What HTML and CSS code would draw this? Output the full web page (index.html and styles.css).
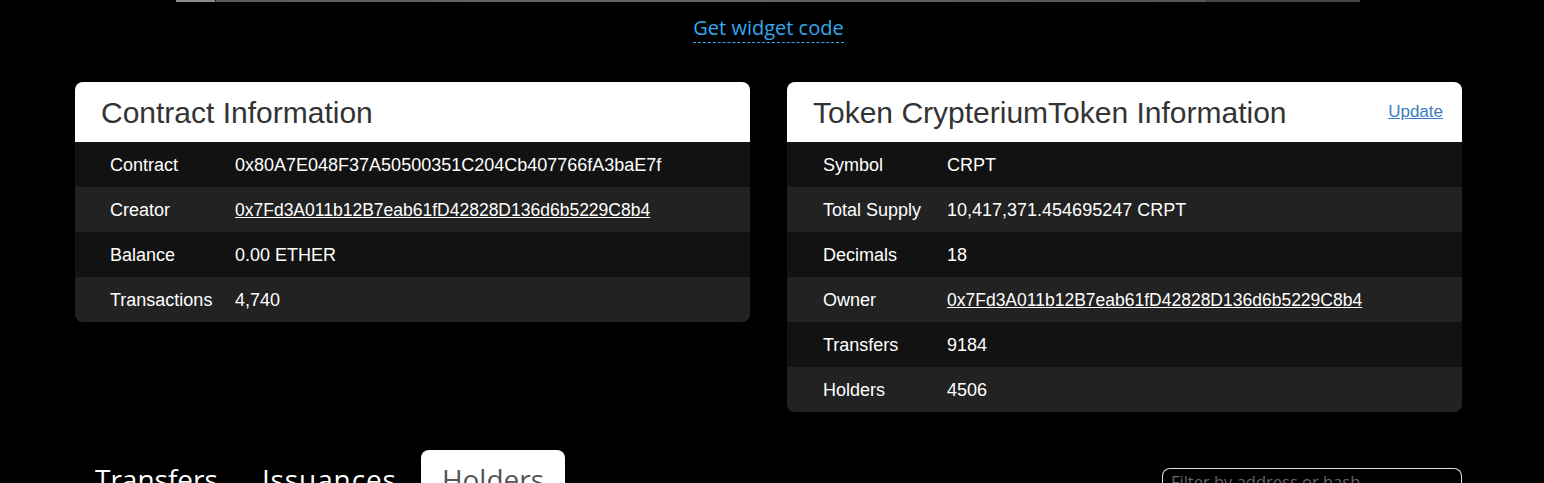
FILE: index.html
```html
<!DOCTYPE html>
<html>
<head>
<meta charset="utf-8">
<link rel="stylesheet" href="styles.css">
</head>
<body>
<div class="strip">
  <div class="seg seg-a"></div>
  <div class="seg seg-b"></div>
  <div class="seg seg-c"></div>
</div>
<div class="page">
  <div class="widget"><a class="widget-link" href="#">Get widget code</a></div>
  <div class="cards">
    <div class="card">
      <div class="card-head"><h2 class="card-title">Contract Information</h2></div>
      <div class="rows rows-left">
        <div class="row"><span class="lbl">Contract</span><span class="val">0x80A7E048F37A50500351C204Cb407766fA3baE7f</span></div>
        <div class="row"><span class="lbl">Creator</span><span class="val"><a class="addr" href="#">0x7Fd3A011b12B7eab61fD42828D136d6b5229C8b4</a></span></div>
        <div class="row"><span class="lbl">Balance</span><span class="val">0.00 ETHER</span></div>
        <div class="row"><span class="lbl">Transactions</span><span class="val">4,740</span></div>
      </div>
    </div>
    <div class="card">
      <div class="card-head"><h2 class="card-title">Token CrypteriumToken Information</h2><a class="update" href="#">Update</a></div>
      <div class="rows rows-right">
        <div class="row"><span class="lbl">Symbol</span><span class="val">CRPT</span></div>
        <div class="row"><span class="lbl">Total Supply</span><span class="val">10,417,371.454695247 CRPT</span></div>
        <div class="row"><span class="lbl">Decimals</span><span class="val">18</span></div>
        <div class="row"><span class="lbl">Owner</span><span class="val"><a class="addr" href="#">0x7Fd3A011b12B7eab61fD42828D136d6b5229C8b4</a></span></div>
        <div class="row"><span class="lbl">Transfers</span><span class="val">9184</span></div>
        <div class="row"><span class="lbl">Holders</span><span class="val">4506</span></div>
      </div>
    </div>
  </div>
  <div class="tabbar">
    <div class="tabs">
      <a class="tab" href="#">Transfers</a>
      <a class="tab tab-wide" href="#">Issuances</a>
      <a class="tab tab-active" href="#">Holders</a>
    </div>
    <input class="filter" type="text" placeholder="Filter by address or hash">
  </div>
</div>
</body>
</html>
```
FILE: styles.css
```css
html, body {
  margin: 0;
  padding: 0;
  background: #000;
  overflow: hidden;
}
body {
  font-family: "Liberation Sans", Arial, sans-serif;
  color: #fff;
}
.strip {
  display: flex;
  height: 2px;
  margin-left: 176px;
  width: 1184px;
}
.seg-a { width: 39px; background: #8a8a8a; }
.seg-b { width: 990px; background: linear-gradient(90deg, #5a5a5a, #666 40%, #555); border-left: 1px solid #222; }
.seg-c { flex: 1; background: #444; }
.page {
  margin-left: 75px;
  width: 1387px;
}
.widget {
  text-align: center;
  padding-top: 12px;
  height: 80px;
  box-sizing: border-box;
}
.widget-link {
  font-family: "Open Sans", sans-serif;
  font-size: 20px;
  line-height: 28px;
  color: #35a8ee;
  text-decoration: none;
  border-bottom: 1px dashed #35a8ee;
  display: inline-block;
}
.cards {
  display: flex;
  gap: 37px;
  align-items: flex-start;
}
.card {
  width: 675px;
  border-radius: 8px;
  overflow: hidden;
  background: #1a1a1a;
}
.card-head {
  background: #fff;
  height: 60px;
  display: flex;
  align-items: center;
  justify-content: space-between;
  padding: 0 19px 0 26px;
}
.card-title {
  margin: 0;
  font-weight: normal;
  font-size: 30px;
  color: #333;
  line-height: 34px;
  padding-top: 1px;
}
.update {
  font-size: 17px;
  color: #3a7cc0;
  text-decoration: underline;
  padding-bottom: 1px;
}
.row {
  display: flex;
  height: 45px;
  align-items: center;
  font-size: 18px;
  line-height: 22px;
  background: #121212;
}
.row:nth-child(even) {
  background: #222;
}
.rows-left .row { padding-left: 35px; }
.rows-right .row { padding-left: 36px; }
.rows-left .lbl { width: 125px; }
.rows-right .lbl { width: 124px; }
.lbl, .val { color: #fff; }
.addr {
  color: #fff;
  font-size: 17.5px;
  text-decoration: underline;
}
.tabbar {
  display: flex;
  justify-content: space-between;
  align-items: flex-start;
  margin-top: 38px;
}
.tabs {
  display: flex;
  gap: 4px;
}
.tab {
  font-family: "Open Sans", sans-serif;
  font-size: 28px;
  line-height: 34px;
  padding: 12px 20px 8px;
  color: #fff;
  text-decoration: none;
  border-radius: 8px 8px 0 0;
}
.tab-wide {
  letter-spacing: 0.9px;
}
.tab-active {
  background: #fff;
  color: #555;
  padding: 12px 21px 8px;
}
.filter {
  margin-top: 18px;
  width: 300px;
  height: 26px;
  box-sizing: border-box;
  background: #000;
  border: 1px solid #ddd;
  border-bottom: 0;
  border-radius: 8px 8px 0 0;
  padding: 0 8px;
  font-family: "Open Sans", sans-serif;
  font-size: 16.5px;
  color: #fff;
}
.filter::placeholder {
  color: #666;
}
```
